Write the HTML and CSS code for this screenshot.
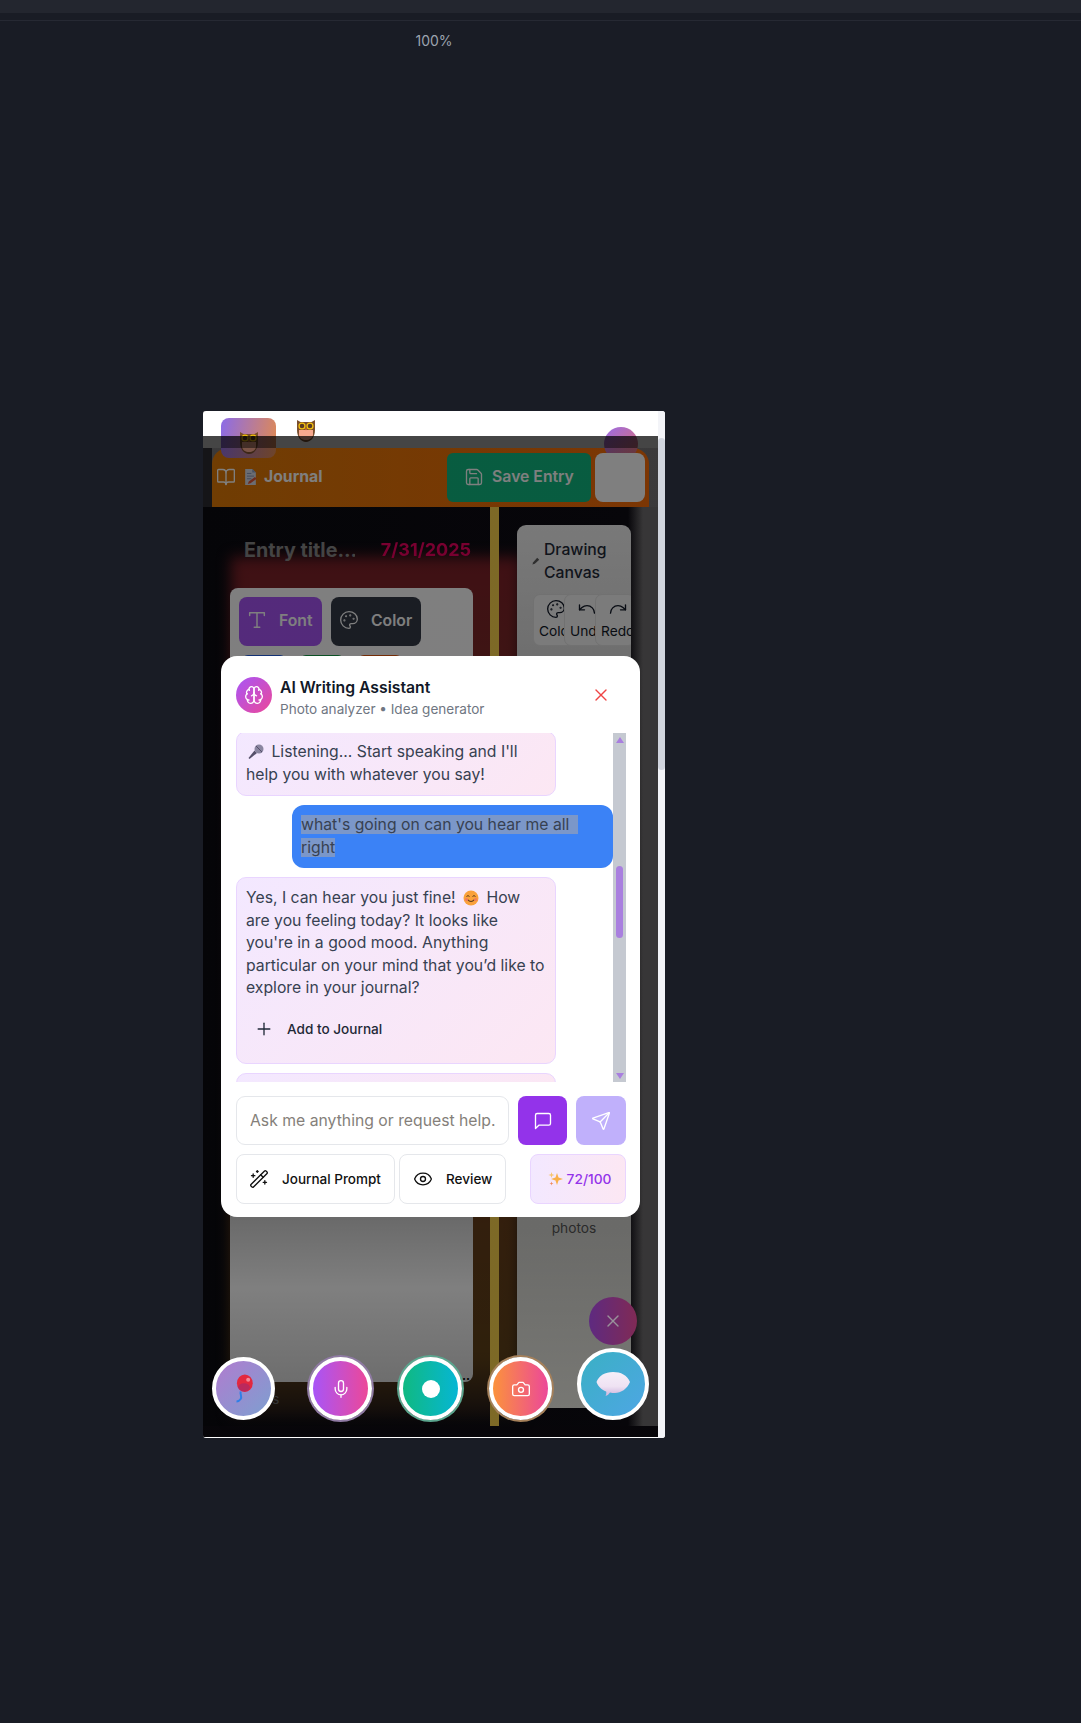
FILE: index.html
```html
<!DOCTYPE html>
<html lang="en">
<head>
  <meta charset="UTF-8" />
  <meta name="viewport" content="width=device-width, initial-scale=1.0" />
  <title>Journal preview</title>
  <link rel="stylesheet" href="styles.css">
</head>
<body>
  <div class="topbar"></div>
  <div class="rule"></div>

  <div class="workspace">
    <div class="zoom-label">100%</div>

    <div class="phone">
      <div class="viewport">
        <div class="app-top">
          <div class="logo">
            <svg class="owl owl-small" viewBox="0 0 20 24"><use href="#owl"/></svg>
          </div>
          <svg class="owl" viewBox="0 0 20 24">
            <g id="owl">
              <path d="M1 1l3.500 2h11L19 1v10c0 7-4 12-9 12S1 18 1 11z" fill="#7a4e2d"/>
              <path d="M3 11h14v5c-.5 3-3.500 5-7 5s-6.500-2-7-5z" fill="#f7a98f"/>
              <circle cx="6" cy="7" r="3.600" fill="#f4c20d"/>
              <circle cx="14" cy="7" r="3.600" fill="#f4c20d"/>
              <circle cx="6" cy="7" r="2.300" fill="#5a3a22"/>
              <circle cx="14" cy="7" r="2.300" fill="#5a3a22"/>
              <path d="M8.800 9.500h2.400L10 11.500z" fill="#e8762d"/>
            </g>
          </svg>
          <div class="avatar"></div>
        </div>

        <div class="head-band">
          <div class="journal-head">
            <svg class="icon head-book" viewBox="0 0 24 24"><path d="M12 7v14"/><path d="M3 18a1 1 0 0 1-1-1V4a1 1 0 0 1 1-1h5a4 4 0 0 1 4 4 4 4 0 0 1 4-4h5a1 1 0 0 1 1 1v13a1 1 0 0 1-1 1h-6a3 3 0 0 0-3 3 3 3 0 0 0-3-3z"/></svg>
            <svg class="memo" viewBox="0 0 14 18">
              <path d="M1 0h8l4 4v14H1z" fill="#d7dbe6"/>
              <path d="M9 0l4 4H9z" fill="#8fa0c4"/>
              <path d="M3 5h5M3 8h8M3 11h5" stroke="#7f8db0" stroke-width="1"/>
              <path d="M4 17l1-3 7-5 2 2-7 5z" fill="#e0563a"/>
            </svg>
            <span class="head-title">Journal</span>
            <button class="save-btn">
              <svg class="icon" viewBox="0 0 24 24"><path d="M15.2 3a2 2 0 0 1 1.4.6l3.8 3.8a2 2 0 0 1 .6 1.4V19a2 2 0 0 1-2 2H5a2 2 0 0 1-2-2V5a2 2 0 0 1 2-2z"/><path d="M17 21v-7a1 1 0 0 0-1-1H8a1 1 0 0 0-1 1v7"/><path d="M7 3v4a1 1 0 0 0 1 1h7"/></svg>
              Save Entry
            </button>
            <button class="blank-btn"></button>
          </div>
        </div>

        <div class="journal-body">
          <div class="glow"></div>
          <div class="left-col">
            <div class="entry-row">
              <span class="entry-title">Entry title...</span>
              <span class="entry-date">7/31/2025</span>
            </div>
            <div class="format-card">
              <div class="format-row">
                <button class="fmt-btn fmt-font">
                  <svg class="icon icon-type" viewBox="0 0 24 24"><path d="M4 7V4h16v3"/><path d="M9 20h6"/><path d="M12 4v16"/></svg>
                  Font
                </button>
                <button class="fmt-btn fmt-color">
                  <svg class="icon" viewBox="0 0 24 24"><use href="#palette"/></svg>
                  Color
                </button>
              </div>
              <div class="swatches">
                <span class="swatch swatch-blue"></span>
                <span class="swatch swatch-green"></span>
                <span class="swatch swatch-orange"></span>
              </div>
              <span class="format-dots">...</span>
            </div>
            <span class="format-tail">s</span>
          </div>
          <div class="gold-bar"></div>
          <div class="right-col">
            <div class="draw-card">
              <div class="draw-title">
                <svg class="pencil" viewBox="0 0 10 10"><path d="M.5 9.500l1-3 5-5.500 2.500 2.500-5.500 5z" fill="#5c5c5c"/></svg>
                <span>Drawing Canvas</span>
              </div>
              <div class="draw-tools">
                <div class="tool">
                  <svg class="icon" viewBox="0 0 24 24">
                    <g id="palette">
                      <circle cx="13.5" cy="6.5" r=".5"/><circle cx="17.5" cy="10.5" r=".5"/><circle cx="8.5" cy="7.5" r=".5"/><circle cx="6.5" cy="12.5" r=".5"/>
                      <path d="M12 2C6.5 2 2 6.5 2 12s4.5 10 10 10c.926 0 1.648-.746 1.648-1.688 0-.437-.18-.835-.437-1.125-.29-.289-.438-.652-.438-1.125a1.64 1.64 0 0 1 1.668-1.668h1.996c3.051 0 5.555-2.503 5.555-5.554C21.965 6.012 17.461 2 12 2z"/>
                    </g>
                  </svg>
                  <span>Color</span>
                </div>
                <div class="tool">
                  <svg class="icon" viewBox="0 0 24 24"><path d="M3 7v6h6"/><path d="M21 17a9 9 0 0 0-9-9 9 9 0 0 0-6 2.3L3 13"/></svg>
                  <span>Undo</span>
                </div>
                <div class="tool">
                  <svg class="icon" viewBox="0 0 24 24"><path d="M21 7v6h-6"/><path d="M3 17a9 9 0 0 1 9-9 9 9 0 0 1 6 2.3L21 13"/></svg>
                  <span>Redo</span>
                </div>
              </div>
              <div class="draw-note">photos</div>
            </div>
          </div>
        </div>

        <div class="dim"></div>

        <!-- assistant dialog -->
        <div class="assistant">
          <div class="assistant-head">
            <div class="brain">
              <svg class="icon" viewBox="0 0 24 24"><path d="M12 5a3 3 0 1 0-5.997.125 4 4 0 0 0-2.526 5.770 4 4 0 0 0 .556 6.588A4 4 0 1 0 12 18Z"/><path d="M12 5a3 3 0 1 1 5.997.125 4 4 0 0 1 2.526 5.770 4 4 0 0 1-.556 6.588A4 4 0 1 1 12 18Z"/><path d="M15 13a4.500 4.500 0 0 1-3-4 4.500 4.500 0 0 1-3 4"/><path d="M17.599 6.500a3 3 0 0 0 .399-1.375"/><path d="M6.003 5.125A3 3 0 0 0 6.401 6.500"/><path d="M3.477 10.896a4 4 0 0 1 .585-.396"/><path d="M19.938 10.500a4 4 0 0 1 .585.396"/><path d="M6 18a4 4 0 0 1-1.967-.516"/><path d="M19.967 17.484A4 4 0 0 1 18 18"/></svg>
            </div>
            <div class="assistant-names">
              <div class="assistant-title">AI Writing Assistant</div>
              <div class="assistant-sub">Photo analyzer • Idea generator</div>
            </div>
            <svg class="icon close-x" viewBox="0 0 24 24"><path d="M18 6 6 18"/><path d="m6 6 12 12"/></svg>
          </div>

          <div class="chat">
            <div class="messages">
              <div class="bubble ai">
                <svg class="emoji emoji-mic" viewBox="0 0 16 16">
                  <path d="M1.500 15l-1-1 6-7.500 2.500 2.500z" fill="#55506a"/>
                  <circle cx="11" cy="5" r="4.500" fill="#8a86a0"/>
                  <path d="M8 2l6 6" stroke="#55506a" stroke-width="1"/>
                </svg>
                Listening... Start speaking and I'll help you with whatever you say!
              </div>
              <div class="bubble me">
                <span class="sel sel-first">what's going on can you hear me all</span><br><span class="sel">right</span>
              </div>
              <div class="bubble ai">
                Yes, I can hear you just fine!
                <svg class="emoji" viewBox="0 0 16 16">
                  <circle cx="8" cy="8" r="7.500" fill="#f9a13b"/>
                  <path d="M3.500 6.500q1.500-1.800 3 0M9.500 6.500q1.500-1.800 3 0" fill="none" stroke="#5b3a1a" stroke-width="1"/>
                  <path d="M4.500 9.500q3.500 4 7 0" fill="none" stroke="#5b3a1a" stroke-width="1.100"/>
                  <circle cx="3.500" cy="9.500" r="1.500" fill="#f27a5e"/>
                  <circle cx="12.500" cy="9.500" r="1.500" fill="#f27a5e"/>
                </svg>
                How are you feeling today? It looks like you're in a good mood. Anything particular on your mind that you’d like to explore in your journal?
                <div class="add-journal">
                  <svg class="icon" viewBox="0 0 24 24"><path d="M5 12h14"/><path d="M12 5v14"/></svg>
                  Add to Journal
                </div>
              </div>
              <div class="bubble ai"></div>
            </div>
            <div class="chat-scroll">
              <span class="arrow-up"></span>
              <span class="chat-thumb"></span>
              <span class="arrow-down"></span>
            </div>
          </div>

          <div class="input-row">
            <input class="ask" type="text" placeholder="Ask me anything or request help.">
            <button class="square-btn square-chat">
              <svg class="icon" viewBox="0 0 24 24"><path d="M21 15a2 2 0 0 1-2 2H7l-4 4V5a2 2 0 0 1 2-2h14a2 2 0 0 1 2 2z"/></svg>
            </button>
            <button class="square-btn square-send">
              <svg class="icon" viewBox="0 0 24 24"><path d="M14.536 21.686a.5.5 0 0 0 .937-.024l6.500-19a.496.496 0 0 0-.635-.635l-19 6.500a.5.5 0 0 0-.024.937l7.930 3.180a2 2 0 0 1 1.112 1.110z"/><path d="m21.854 2.147-10.940 10.939"/></svg>
            </button>
          </div>

          <div class="action-row">
            <button class="action action-prompt">
              <svg class="icon" viewBox="0 0 24 24"><path d="m21.640 3.640-1.280-1.280a1.210 1.210 0 0 0-1.720 0L2.360 18.640a1.210 1.210 0 0 0 0 1.720l1.280 1.280a1.200 1.200 0 0 0 1.720 0L21.640 5.360a1.200 1.200 0 0 0 0-1.720"/><path d="m14 7 3 3"/><path d="M5 6v4"/><path d="M19 14v4"/><path d="M10 2v2"/><path d="M7 8H3"/><path d="M21 16h-4"/><path d="M11 3H9"/></svg>
              Journal Prompt
            </button>
            <button class="action action-review">
              <svg class="icon" viewBox="0 0 24 24"><path d="M2.062 12.348a1 1 0 0 1 0-.696 10.750 10.750 0 0 1 19.876 0 1 1 0 0 1 0 .696 10.750 10.750 0 0 1-19.876 0"/><circle cx="12" cy="12" r="3"/></svg>
              Review
            </button>
            <div class="credits">
              <svg class="emoji emoji-spark" viewBox="0 0 16 16">
                <path d="M9 2l1.500 4.500L15 8l-4.500 1.500L9 14l-1.500-4.500L3 8l4.500-1.500z" fill="#f9b04a"/>
                <path d="M3.500 1l.7 2.300 2.300.7-2.300.7-.7 2.300-.7-2.300L.5 4l2.300-.7z" fill="#f7c56e"/>
                <path d="M3.500 10.500l.5 1.500 1.500.5-1.500.5-.5 1.500-.5-1.500-1.500-.5 1.500-.5z" fill="#f08a5d"/>
              </svg>
              72/100
            </div>
          </div>
        </div>

        <!-- floating buttons -->
        <button class="fab fab-balloon">
          <svg class="balloon" viewBox="0 0 24 36">
            <path d="M8 21c-1 4 2 6 0 9s-4 3-5 3" fill="none" stroke="#2f7fe8" stroke-width="2.400"/>
            <ellipse cx="13" cy="11" rx="9.500" ry="10.500" fill="#e3283f"/>
            <ellipse cx="12" cy="16" rx="7" ry="5" fill="#a92a6a" opacity=".7"/>
            <circle cx="17" cy="7" r="2.400" fill="#f58a98"/>
          </svg>
        </button>
        <button class="fab fab-mic">
          <svg class="icon" viewBox="0 0 24 24"><path d="M12 2a3 3 0 0 0-3 3v7a3 3 0 0 0 6 0V5a3 3 0 0 0-3-3Z"/><path d="M19 10v2a7 7 0 0 1-14 0v-2"/><path d="M12 19v3"/></svg>
        </button>
        <button class="fab fab-record"><span class="record-dot"></span></button>
        <button class="fab fab-camera">
          <svg class="icon" viewBox="0 0 24 24"><path d="M14.500 4h-5L7 7H4a2 2 0 0 0-2 2v9a2 2 0 0 0 2 2h16a2 2 0 0 0 2-2V9a2 2 0 0 0-2-2h-3l-2.500-3z"/><circle cx="12" cy="13" r="3"/></svg>
        </button>
        <button class="fab-close">
          <svg class="icon" viewBox="0 0 24 24"><path d="M18 6 6 18"/><path d="m6 6 12 12"/></svg>
        </button>
        <button class="fab fab-chat">
          <svg class="bubble-icon" viewBox="0 0 34 28">
            <defs>
              <linearGradient id="speech" x1="0" y1="0" x2="0" y2="1">
                <stop offset="0" stop-color="#f6eff8"/>
                <stop offset=".6" stop-color="#efe2f3"/>
                <stop offset="1" stop-color="#cdb4dc"/>
              </linearGradient>
            </defs>
            <path d="M17 2c8 0 14 3 17 10-3 7-9 11-15 11-2 0-3.500 0-5-.5-1 1.500-2.500 3-4.500 3.500.7-1.500 1-3 .7-4.500C5 19.500 2 16 .5 12 3 5.500 9 2 17 2z" fill="url(#speech)"/>
          </svg>
        </button>
      </div>
      <div class="page-scroll"><span class="page-thumb"></span></div>
    </div>
  </div>
</body>
</html>
```

FILE: styles.css
```css
* {
  box-sizing: border-box;
}

body {
  margin: 0;
  height: 1723px;
  background-color: #191c25;
  font-family: Inter, "Liberation Sans", sans-serif;
  overflow: hidden;
}

button {
  font-family: Inter, "Liberation Sans", sans-serif;
  border: none;
  padding: 0;
}

.icon {
  fill: none;
  stroke: currentColor;
  stroke-width: 1.6;
  stroke-linecap: round;
  stroke-linejoin: round;
  width: 20px;
  height: 20px;
  flex: none;
}

.topbar {
  height: 13px;
  background: #23262f;
}

.rule {
  height: 1px;
  margin-top: 7px;
  background: #262933;
}

.workspace {
  width: 868px;
  display: flex;
  flex-direction: column;
  align-items: center;
}

.zoom-label {
  margin-top: 12px;
  height: 17px;
  line-height: 16px;
  font-size: 14px;
  color: #9ca3af;
}

/* phone frame */
.phone {
  margin-top: 361px;
  width: 462px;
  height: 1027px;
  background: #fff;
  border-radius: 3px;
  display: flex;
  overflow: hidden;
}

.viewport {
  position: relative;
  flex: 1;
  overflow: hidden;
  background: #0e0b13;
  margin-bottom: 1px;
}

.page-scroll {
  width: 7px;
  background: #f3f4f8;
}

.page-thumb {
  display: block;
  margin-top: 27px;
  height: 332px;
  border-radius: 4px;
  background: #d1d5de;
}

.app-top {
  height: 37px;
  background: #fff;
  display: flex;
  padding: 7px 20px 0 18px;
}

.logo {
  width: 55px;
  height: 40px;
  border-radius: 8px;
  background: linear-gradient(100deg, #8b6be8, #e08a52);
  display: flex;
  justify-content: center;
  padding-top: 13px;
}

.owl {
  width: 20px;
  height: 24px;
  margin: 1px 0 0 20px;
  flex: none;
}

.owl-small {
  margin: 0;
}

.avatar {
  width: 34px;
  height: 34px;
  margin: 9px 0 0 auto;
  border-radius: 50%;
  background: linear-gradient(135deg, #9a6be8, #e0706a);
}

.head-band {
  background: linear-gradient(90deg, #2a2a30 9px, #757375 9px);
  padding: 0 9px;
}

.journal-head {
  height: 59px;
  border-radius: 16px 16px 0 0;
  background: linear-gradient(90deg, #e07a06, #f86c08);
  display: flex;
  align-items: center;
  padding: 0 4px;
  color: #fff;
}

.head-book {
  margin-right: 8px;
  margin-bottom: 2px;
}

.memo {
  width: 13px;
  height: 16px;
  margin-right: 7px;
  margin-bottom: 2px;
}

.head-title {
  font-size: 15.750px;
  font-weight: 700;
  padding-bottom: 2px;
}

.save-btn {
  margin-left: auto;
  width: 144px;
  height: 49px;
  padding-bottom: 2px;
  border-radius: 6px;
  background: #10b981;
  color: #fff;
  font-size: 15.750px;
  font-weight: 600;
  display: flex;
  align-items: center;
  justify-content: center;
  gap: 8px;
}

.blank-btn {
  width: 50px;
  height: 49px;
  margin-left: 4px;
  border-radius: 8px;
  background: #fff;
}

/* page under the dialog */
.journal-body {
  position: relative;
  padding: 0 9px;
  height: 919px;
  display: grid;
  grid-template-columns: 278px 9px 1fr;
  background: linear-gradient(90deg, #0a0a10 0, #0e0c14 425px, #6e6c6e 440px);
}

.glow {
  position: absolute;
  left: 28px;
  top: 50px;
  width: 290px;
  height: 860px;
  filter: blur(7px);
  background: linear-gradient(#7e2028, #7c2a28 120px, #6f3a1c 500px, #5e4018 800px, #241a18 860px);
}

.left-col {
  position: relative;
  padding-left: 18px;
}

.entry-row {
  height: 81px;
  padding: 29px 19px 0 14px;
  display: flex;
  justify-content: space-between;
  font-weight: 700;
  line-height: 28px;
  white-space: nowrap;
}

.entry-title {
  width: 111px;
  overflow: hidden;
  font-size: 19.750px;
  color: #888;
}

.entry-date {
  font-size: 18px;
  color: #f00060;
  filter: blur(.6px);
}

.format-card {
  position: relative;
  width: 243px;
  height: 794px;
  padding: 9px;
  border-radius: 8px;
  background: linear-gradient(#fffeff, #fbfbfb 500px, #d4d4d4 630px, #ffffff 700px, #dcdcdc);
}

.format-row {
  display: flex;
  gap: 9px;
}

.fmt-btn {
  height: 49px;
  padding: 0 0 3px 8px;
  border-radius: 8px;
  display: flex;
  align-items: center;
  gap: 12px;
  color: #fff;
  font-size: 15.750px;
  font-weight: 600;
}

.icon-type {
  width: 22px;
  height: 22px;
  margin: 0 -1px;
}

.fmt-font {
  width: 83px;
  background: #a855f7;
}

.fmt-color {
  width: 90px;
  background: #343a47;
}

.swatches {
  display: flex;
  gap: 14px;
  margin: 9px 0 0 3px;
}

.swatch {
  width: 44px;
  height: 20px;
  border-radius: 6px;
}

.swatch-blue {
  background: #2563eb;
}

.swatch-green {
  background: #16a34a;
}

.swatch-orange {
  background: #ea580c;
}

.format-dots {
  position: absolute;
  right: 3px;
  bottom: 2px;
  font-size: 12px;
  font-weight: 700;
  line-height: 8px;
  color: #000;
}

.format-tail {
  position: absolute;
  left: 60px;
  top: 883px;
  font-size: 14px;
  color: #666;
}

.gold-bar {
  position: relative;
  background: #fbd34d;
}

.right-col {
  position: relative;
  padding: 18px 0 0 18px;
  overflow: hidden;
}

.draw-card {
  width: 114px;
  height: 883px;
  padding: 13px 0 0 16px;
  border-radius: 9px;
  background: linear-gradient(#f2f2f2, #dedede 130px, #d4d4d0 700px, #f0f0e8);
  overflow: hidden;
}

.draw-title {
  display: flex;
  align-items: center;
  gap: 4px;
  margin-left: -1px;
  font-size: 15.750px;
  line-height: 23px;
  font-weight: 500;
  color: #1f2937;
}

.pencil {
  width: 8px;
  height: 8px;
  flex: none;
}

.draw-tools {
  display: flex;
  margin-top: 10px;
}

.tool {
  width: 40px;
  margin-right: -9px;
  flex: none;
  height: 52px;
  padding: 4px 0 0 5px;
  border: 1px solid #e2e2e2;
  border-radius: 7px;
  background: #f6f6f6;
  overflow: hidden;
  display: flex;
  flex-direction: column;
  font-size: 13.750px;
  line-height: 20px;
  color: #111827;
  white-space: nowrap;
}

.tool .icon {
  margin: 0 0 2px 7px;
}

.draw-note {
  width: 114px;
  margin: 574px 0 0 -16px;
  text-align: center;
  font-size: 13.750px;
  line-height: 17px;
  color: #555;
}

.dim {
  position: absolute;
  inset: 25px 0 0 0;
  background: linear-gradient(rgba(0, 0, 0, .73) 12px, rgba(0, 0, 0, .5) 12px);
}

/* assistant dialog */
.assistant {
  position: absolute;
  left: 18px;
  top: 245px;
  width: 419px;
  height: 561px;
  background: #fff;
  border-radius: 16px;
  padding: 0 14px 0 15px;
  color: #111827;
}

.assistant-head {
  display: flex;
  align-items: center;
  height: 77px;
  padding-top: 1px;
}

.brain {
  width: 36px;
  height: 36px;
  border-radius: 50%;
  background: linear-gradient(135deg, #a855f7, #ec4899);
  color: #fff;
  display: flex;
  align-items: center;
  justify-content: center;
}

.assistant-names {
  margin-left: 8px;
  padding-top: 6px;
  flex: 1;
}

.assistant-title {
  font-size: 15.750px;
  line-height: 22px;
  font-weight: 600;
}

.assistant-sub {
  font-size: 13.550px;
  line-height: 20px;
  color: #6f7682;
}

.close-x {
  color: #ef4444;
  margin-right: 15px;
}

.chat {
  height: 349px;
  display: flex;
  overflow: hidden;
}

.messages {
  width: 377px;
  margin-top: -2px;
  display: flex;
  flex-direction: column;
  gap: 9px;
}

.bubble {
  flex: none;
  width: 320px;
  padding: 9px 8px 9px 9px;
  border-radius: 10px;
  font-size: 15.750px;
  line-height: 22.500px;
  color: #374151;
  background: linear-gradient(135deg, #f3e8ff, #fce7f3);
  border: 1px solid #e9d5ff;
}

.bubble:empty {
  height: 40px;
}

.me {
  align-self: flex-end;
  width: 321px;
  padding: 9px;
  background: #3b82f6;
  border: none;
  border-radius: 12px;
}

.sel {
  background: #7b97c9;
}

.sel-first {
  padding-right: 9px;
}

.emoji {
  width: 16px;
  height: 16px;
  vertical-align: -3px;
  margin: 0 3px;
}

.emoji-mic {
  margin-left: 2px;
}

.add-journal {
  display: flex;
  align-items: center;
  gap: 13px;
  margin: 19px 0 15px 8px;
  font-size: 13.600px;
  font-weight: 500;
  line-height: 20px;
  color: #1f2937;
}

.chat-scroll {
  position: relative;
  width: 13px;
  background: #c5c9d1;
}

.arrow-up,
.arrow-down {
  position: absolute;
  left: 2.500px;
  width: 0;
  height: 0;
  border-left: 4px solid transparent;
  border-right: 4px solid transparent;
}

.arrow-up {
  top: 4px;
  border-bottom: 6px solid #a97fdf;
}

.arrow-down {
  bottom: 3px;
  border-top: 6px solid #a97fdf;
}

.chat-thumb {
  position: absolute;
  left: 3px;
  top: 133px;
  width: 7px;
  height: 72px;
  border-radius: 4px;
  background: #a97fdf;
}

.input-row {
  display: flex;
  gap: 9px;
  margin-top: 14px;
}

.ask {
  width: 273px;
  height: 49px;
  border: 1px solid #e5e7eb;
  border-radius: 9px;
  padding: 0 10px 0 13px;
  font-family: Inter, "Liberation Sans", sans-serif;
  font-size: 15.750px;
  outline: none;
}

.ask::placeholder {
  color: #857f7a;
}

.square-btn {
  width: 49px;
  height: 49px;
  border-radius: 8px;
  color: #fff;
  display: flex;
  align-items: center;
  justify-content: center;
}

.square-chat {
  background: #9333ea;
}

.square-send {
  width: 50px;
  background: #c0b0fb;
}

.action-row {
  display: flex;
  margin-top: 9px;
}

.action {
  height: 50px;
  border: 1px solid #e5e7eb;
  border-radius: 8px;
  background: #fff;
  color: #111;
  display: flex;
  align-items: center;
  gap: 13px;
  padding-left: 12px;
  font-size: 13.500px;
  font-weight: 500;
}

.action-prompt {
  width: 159px;
  margin-right: 4px;
}

.action-review {
  width: 107px;
  padding-left: 13px;
}

.credits {
  margin-left: auto;
  width: 96px;
  height: 50px;
  border: 1px solid #e9d5ff;
  border-radius: 8px;
  background: linear-gradient(90deg, #f3e8ff, #fce7f3);
  color: #9333ea;
  font-size: 13.750px;
  display: flex;
  align-items: center;
  justify-content: center;
  font-weight: 500;
}

/* floating buttons */
.fab {
  position: absolute;
  top: 946px;
  width: 63px;
  height: 63px;
  border-radius: 50%;
  border: 4px solid #fff;
  color: #fff;
  display: flex;
  align-items: center;
  justify-content: center;
}

.fab-balloon {
  left: 9px;
  background: linear-gradient(135deg, #b07ccf, #7d9fd0);
}

.fab-mic {
  left: 106px;
  background: linear-gradient(90deg, #a855f7, #ec4899);
  box-shadow: 0 0 0 2px #8f7aa3;
}

.fab-record {
  left: 196px;
  background: linear-gradient(90deg, #10b981, #06b6d4);
  box-shadow: 0 0 0 2px #5ba58e;
}

.fab-camera {
  left: 286px;
  background: linear-gradient(90deg, #fb923c, #ec4899);
  box-shadow: 0 0 0 2px #a5805a;
}

.balloon {
  width: 22px;
  height: 30px;
}

.record-dot {
  width: 18px;
  height: 18px;
  border-radius: 50%;
  background: #fff;
}

.fab-close {
  position: absolute;
  left: 386px;
  top: 886px;
  width: 48px;
  height: 48px;
  border-radius: 50%;
  background: linear-gradient(90deg, #5e2a80, #802a55);
  color: #99929b;
  display: flex;
  align-items: center;
  justify-content: center;
}

.fab-chat {
  left: 374px;
  top: 937px;
  width: 72px;
  height: 72px;
  background: linear-gradient(135deg, #3ab0c4, #4ea6e4);
}

.bubble-icon {
  width: 34px;
  height: 28px;
}
```
